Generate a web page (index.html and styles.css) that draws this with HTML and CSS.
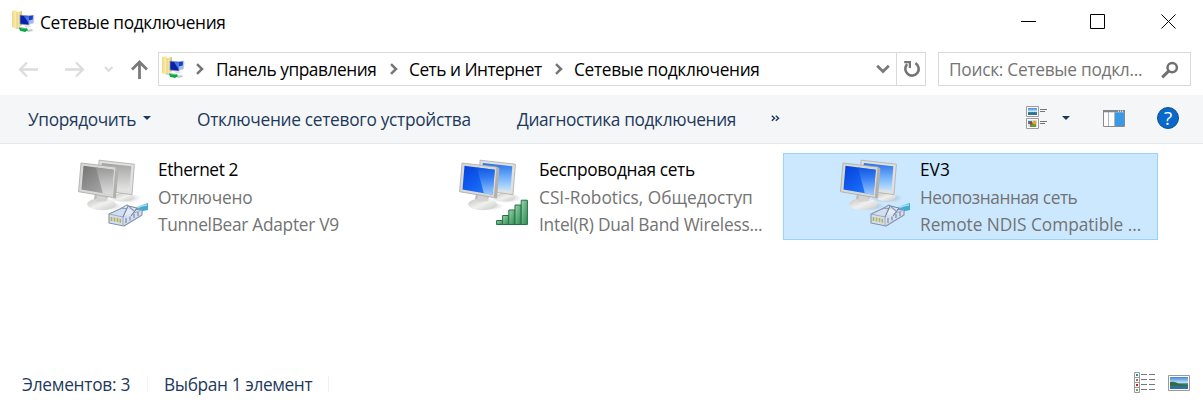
FILE: index.html
```html
<!DOCTYPE html>
<html lang="ru">
<head>
<meta charset="utf-8">
<title>Сетевые подключения</title>
<link rel="stylesheet" href="styles.css">
</head>
<body>
<svg class="defs" aria-hidden="true">
  <defs>
    <linearGradient id="paper" x1="0" y1="0" x2="1" y2="0"><stop offset="0" stop-color="#efd883"/><stop offset=".5" stop-color="#fff3bd"/><stop offset="1" stop-color="#dfc160"/></linearGradient>
    <linearGradient id="blueA" x1="0" y1="0" x2=".9" y2="1"><stop offset="0" stop-color="#0640d8"/><stop offset=".55" stop-color="#1260f2"/><stop offset="1" stop-color="#2b80fa"/></linearGradient>
    <linearGradient id="blueB" x1="0" y1="0" x2="0" y2="1"><stop offset="0" stop-color="#1258e0"/><stop offset=".4" stop-color="#3f86f4"/><stop offset="1" stop-color="#c4e2ff"/></linearGradient>
    <linearGradient id="blueC" x1="0" y1="0" x2="0" y2="1"><stop offset="0" stop-color="#2a6fe8"/><stop offset=".5" stop-color="#6fb0fa"/><stop offset="1" stop-color="#c8e4ff"/></linearGradient>
    <linearGradient id="grayA" x1="0" y1="0" x2=".9" y2="1"><stop offset="0" stop-color="#747474"/><stop offset=".55" stop-color="#959595"/><stop offset="1" stop-color="#b0b0b0"/></linearGradient>
    <linearGradient id="grayB" x1="0" y1="0" x2="0" y2="1"><stop offset="0" stop-color="#9d9d9d"/><stop offset="1" stop-color="#eeeeee"/></linearGradient>
    <linearGradient id="grayC" x1="0" y1="0" x2="0" y2="1"><stop offset="0" stop-color="#a2a2a2"/><stop offset="1" stop-color="#e6e6e6"/></linearGradient>
    <linearGradient id="stand" x1="0" y1="0" x2="1" y2="1"><stop offset="0" stop-color="#c2c2c2"/><stop offset=".5" stop-color="#f0f0ee"/><stop offset="1" stop-color="#c6c6c6"/></linearGradient>
    <linearGradient id="bar" x1="0" y1="0" x2="1" y2="1"><stop offset="0" stop-color="#9bd3ac"/><stop offset="1" stop-color="#2c8a50"/></linearGradient>
    <linearGradient id="sky" x1="0" y1="0" x2="0" y2="1"><stop offset="0" stop-color="#3f86d8"/><stop offset=".5" stop-color="#c5e6f8"/><stop offset=".55" stop-color="#4d8877"/><stop offset=".75" stop-color="#2e7690"/><stop offset="1" stop-color="#2c6cb0"/></linearGradient>
    <radialGradient id="shade"><stop offset="0" stop-color="#777" stop-opacity=".5"/><stop offset="1" stop-color="#777" stop-opacity="0"/></radialGradient>

    <symbol id="folder" viewBox="0 0 24 24">
      <path d="M1 2 6 1v2l5-1v14l-5 4-5-2z" fill="url(#paper)"/>
      <path d="M6 3v17" stroke="#d8bb60" stroke-width=".8"/>
      <path d="M14 7l9-1-.5 8-7 2z" fill="#9fb9e8" stroke="#c4cde0" stroke-width=".7"/>
      <path d="M17 7l5-.5-.3 4-4 1z" fill="#1b3fc4"/>
      <path d="M9 6l8 1 1 9-9-1z" fill="#0a22a6" stroke="#8498cc" stroke-width=".7"/>
      <path d="M13 7l4 .5.8 7z" fill="#4777e8"/>
      <path d="M13 16l6 .5 1 1.5-5 .5z" fill="#e1e1df"/>
      <path d="M4 19l5-1 2 2-1 1z" fill="#ccd3cf"/>
      <path d="M15 21l6-1 1 2-5 1z" fill="#c2cec8"/>
      <path d="M8 18.5l8 .7 1 2-3 1.8-5-1.3z" fill="#12a44a"/>
      <path d="M10 19l5 .5" stroke="#63d58b"/>
    </symbol>

    <symbol id="machines" viewBox="0 0 72 72">
      <ellipse cx="47" cy="40" rx="16" ry="5" fill="url(#shade)"/>
      <ellipse cx="46" cy="39" rx="10" ry="4.2" fill="url(#stand)"/>
      <path d="M21 2.2 56.4 6.2 54 36.7 20 32z" fill="#e0e0de" stroke="#b3b3b2" stroke-width=".9" stroke-linejoin="round"/>
      <path class="screen-back" d="M23.8 4.9 53.3 8.2 51.5 33 23 29z"/>
      <ellipse cx="28" cy="48" rx="17" ry="4.5" fill="url(#shade)"/>
      <path d="M17 36h13l-1 9H15z" fill="#bcbcba"/>
      <ellipse cx="23.5" cy="46.3" rx="14.3" ry="6" fill="url(#stand)"/>
      <path d="M19 37h9l1 6-11 1z" fill="#d3d3d1"/>
      <path d="M3 5 37.5 9 40 10.5 37.5 40 34.5 39.5.5 33.7z" fill="#d8d8d6" stroke="#a8a8a7" stroke-width=".8" stroke-linejoin="round"/>
      <path d="M37.5 9 40 10.5 37.5 40 35 39z" fill="#b0b0af"/>
      <path class="screen-front" d="M5.5 7.7 35.8 11.7 33.6 36.7 3.5 31.6z"/>
      <path class="screen-shine" d="M18 9.4 35.8 11.7 33.6 36.7 24.8 35.2z"/>
    </symbol>

    <symbol id="plug" viewBox="0 0 42 26">
      <path d="M26 10C29 5 34 4 40 2v7c-6 1-8 2-11 5z" fill="#40abd5"/>
      <path d="M29 7q5-3 10-3" fill="none" stroke="#a4e0f4" stroke-width="1.4"/>
      <path d="M1 13 14 7l20 2v5l-18 11-15-3z" class="plug-body" stroke="#8492aa" stroke-width="1.1" stroke-linejoin="round"/>
      <path d="M1 13 15 16 34 9M15 16v8" fill="none" stroke="#9daac1" stroke-width="1"/>
      <path d="M15 16 20 5 29 7 23 15" fill="#e8effa" fill-opacity=".75" stroke="#7485a3" stroke-width="1.1"/>
      <path d="M12 8 19 4 26 10" fill="none" stroke="#8d9bb2" stroke-width="1.1"/>
      <path d="M3.5 16v4M6.5 16.5v4M9.5 17v4M12.3 17.7v4" stroke="#b6b54c" stroke-width="1.7"/>
      <path d="M18 17v5M22 15.5v4M26 13v4M30 11v4" stroke="#8593aa" stroke-width="1.3"/>
    </symbol>
    <symbol id="chevron" viewBox="0 0 10 12"><path d="M2 1.2 7 6 2 10.8" fill="none" stroke="#767676" stroke-width="2.5"/></symbol>
  </defs>
</svg>

<div class="window">
  <header class="titlebar">
    <svg class="folder-icon"><use href="#folder"/></svg>
    <h1 class="title"><span class="t-net">Сетевые подключения</span></h1>
    <div class="controls">
      <svg width="16" height="16" viewBox="0 0 16 16"><path d="M0 8.5h15" stroke="#000"/></svg>
      <svg width="16" height="16" viewBox="0 0 16 16"><path d="M.5 1.5h14v14H.5z" fill="none" stroke="#000"/></svg>
      <svg width="16" height="16" viewBox="0 0 16 16"><path d="M.5 1.5l14 14M14.5 1.5l-14 14" stroke="#000"/></svg>
    </div>
  </header>

  <nav class="nav">
    <svg class="arrows" width="139" height="34" viewBox="0 0 139 34" fill="none">
      <g stroke="#dcdcdc" stroke-width="2"><path d="M20 17.5h18M27 10.5l-7 7 7 7" stroke-width="2.3"/><path d="M65 17.5h18M76 10.5l7 7-7 7" stroke-width="2.3"/><path d="M105 15l3.7 3.8 3.7-3.8"/></g>
    </svg>
    <svg class="up" width="19" height="34" viewBox="0 0 19 34" fill="none" stroke="#7a7a7a" stroke-width="2.8"><path d="M8.5 27V10.5M1 17.5l7.5-7.5 7.5 7.5"/></svg>
    <div class="address">
      <svg class="folder-icon"><use href="#folder"/></svg>
      <svg class="chev chev-first"><use href="#chevron"/></svg>
      <span class="crumb crumb-panel"><span class="t-panel">Панель управления</span></span>
      <svg class="chev"><use href="#chevron"/></svg>
      <span class="crumb crumb-inet"><span class="t-inet">Сеть и Интернет</span></span>
      <svg class="chev"><use href="#chevron"/></svg>
      <span class="crumb"><span class="t-net">Сетевые подключения</span></span>
      <svg class="drop" width="14" height="10" viewBox="0 0 14 10"><path d="M1.2 1.8 7 7.5l5.8-5.7" fill="none" stroke="#7a7a7a" stroke-width="2.8"/></svg>
      <span class="refresh"><svg width="18" height="18" viewBox="0 0 18 18" fill="none" stroke="#757575" stroke-width="2.6"><path d="M12.4 3.1A6.7 6.7 0 1 1 4.2 4.2"/><path d="M1.2 2.2h5.7v5.7" stroke-width="2.2"/></svg></span>
    </div>
    <div class="search">
      <span class="t-search">Поиск: Сетевые подкл...</span>
      <svg width="18" height="18" viewBox="0 0 18 18" fill="none" stroke="#707070"><circle cx="11.2" cy="6.6" r="4.7" stroke-width="2.5"/><path d="M7.6 10.2 1.2 16.3" stroke-width="3"/></svg>
    </div>
  </nav>

  <div class="toolbar">
    <span class="cmd cmd-sort"><span class="t-sort">Упорядочить</span><i class="caret"></i></span>
    <span class="cmd cmd-off"><span class="t-off">Отключение сетевого устройства</span></span>
    <span class="cmd cmd-diag"><span class="t-diag">Диагностика подключения</span></span>
    <svg class="more" width="9" height="8" viewBox="0 0 9 8" fill="none" stroke="#1e395b" stroke-width="1.4"><path d="M.8.7 3.6 3.2.8 5.8M4.8.7 7.6 3.2 4.8 5.8"/></svg>
    <svg class="views" width="22" height="24" viewBox="0 0 22 24">
      <path d="M.5.5h12v10H.5zM.5 12.5h12v10H.5z" fill="#fff" stroke="#9b9b9b"/>
      <path d="M2 2h9v7H2z" fill="url(#sky)"/>
      <path d="M2 14h9v7H2z" fill="#cde5ee"/>
      <path d="M2 15h4v3H2z" fill="#4777bd"/><path d="M4 17h6v4H4z" fill="#679739"/><circle cx="8.5" cy="16.5" r="2" fill="#eca827"/><circle cx="5" cy="17" r="1.5" fill="#b93932"/>
      <path d="M14 3.5h7M14 5.5h5M14 15.5h7M14 17.5h5" stroke="#777"/>
    </svg>
    <i class="caret caret-view"></i>
    <svg class="pane" width="22" height="17" viewBox="0 0 22 17"><path d="M.5.5h21v16H.5z" fill="#fff" stroke="#8a8a8a"/><path d="M0 0h22v2.3H0z" fill="#81878c"/><path d="M15 1.2h1M17 1.2h1M19 1.2h1" stroke="#fff"/><path d="M5.5 2v14M11.5 2v14" stroke="#b4b4b4"/><path d="M12 2.3h9V16h-9z" fill="#3999e7"/></svg>
    <span class="help">?</span>
  </div>

  <main class="items">
    <article class="item off">
      <div class="picture"><svg class="machine"><use href="#machines"/></svg><svg class="overlay plug"><use href="#plug"/></svg></div>
      <div class="info"><b><span class="t-eth">Ethernet 2</span></b><p><span class="t-dis">Отключено</span></p><p><span class="t-bear">TunnelBear Adapter V9</span></p></div>
    </article>
    <article class="item">
      <div class="picture"><svg class="machine"><use href="#machines"/></svg>
        <svg class="overlay signal" viewBox="0 0 32 26" fill="url(#bar)" stroke="#237244"><path d="M.6 21.5h6v4h-6z"/><path d="M6.6 16.5h6.2v9H6.6z"/><path d="M12.8 11h6.2v14.5h-6.2z"/><path d="M19 6h6.2v19.5H19z"/><path d="M25.2 1.2h6.2v24.3h-6.2z"/></svg></div>
      <div class="info"><b><span class="t-wifi">Беспроводная сеть</span></b><p><span class="t-csi">CSI-Robotics, Общедоступ</span></p><p><span class="t-intel">Intel(R) Dual Band Wireless...</span></p></div>
    </article>
    <article class="item selected">
      <div class="picture"><svg class="machine"><use href="#machines"/></svg><svg class="overlay plug"><use href="#plug"/></svg></div>
      <div class="info"><b><span class="t-ev">EV3</span></b><p><span class="t-unk">Неопознанная сеть</span></p><p><span class="t-ndis">Remote NDIS Compatible ...</span></p></div>
    </article>
  </main>

  <footer class="status">
    <span class="count"><span class="t-count">Элементов: 3</span></span>
    <span class="chosen"><span class="t-sel">Выбран 1 элемент</span></span>
    <svg class="details" width="22" height="21" viewBox="0 0 22 21">
      <path d="M.5.5h5v20h-5zM.5 5.5h5M.5 10.5h5M.5 15.5h5" fill="#fff" stroke="#999"/>
      <path d="M2 2h2v2H2z" fill="#258aac"/><path d="M2 7h2v2H2z" fill="#a56b48"/><path d="M2 12h2v2H2z" fill="#c62020"/><path d="M2 17h2v2H2z" fill="#70a650"/>
      <path d="M7 2.5h6M15 2.5h6M7 7.5h6M15 7.5h6M7 12.5h6M15 12.5h6M7 17.5h6M15 17.5h6" stroke="#777"/>
    </svg>
    <svg width="22" height="16" viewBox="0 0 22 16"><path d="M.5.5h21v15H.5z" fill="#fff" stroke="#999"/><path d="M2 2h18v12H2z" fill="url(#sky)"/><path d="M2 7q5-1 9 2l9 1v1H2z" fill="#316b49"/></svg>
  </footer>
</div>
</body>
</html>
```
FILE: styles.css
```css
* { box-sizing: border-box; margin: 0; }
body { width: 1203px; height: 400px; overflow: hidden; background: #fff; font: 17.3px/24px "Open Sans", "Noto Sans", sans-serif; color: #000; }
svg { flex: none; display: block; }
.defs { position: absolute; width: 0; height: 0; }
.window { display: flex; flex-direction: column; height: 400px; white-space: nowrap; }
.window span { flex: none; }

/* Tracking per label */
.t-net { letter-spacing: -.32px; }
.t-panel { letter-spacing: -.45px; }
.t-inet { letter-spacing: -.5px; }
.t-search { letter-spacing: -.27px; }
.t-sort { letter-spacing: -.36px; }
.t-off { letter-spacing: -.29px; }
.t-diag { letter-spacing: -.37px; }
.t-eth { letter-spacing: -.4px; }
.t-dis { letter-spacing: -.2px; }
.t-bear { letter-spacing: -.28px; }
.t-wifi { letter-spacing: -.33px; }
.t-intel { letter-spacing: -.23px; }
.t-unk { letter-spacing: -.43px; }
.t-ndis { letter-spacing: -.04px; }
.t-count { letter-spacing: -.25px; }
.t-sel { letter-spacing: -.38px; }

.titlebar { display: flex; height: 45px; padding: 9px 0 0 11px; }
.folder-icon { width: 24px; height: 24px; }
.title { margin: 2px 0 0 5px; font-size: inherit; font-weight: 400; }
.controls { display: flex; gap: 55px; margin: 4px 26px 0 auto; }
.controls svg:first-child { margin-right: -2px; }

.nav { display: flex; height: 50px; padding-top: 7px; }
.arrows { margin-right: -8px; }
.address { display: flex; align-items: center; width: 768px; height: 34px; margin-left: 8px; padding-left: 2px; border: 1px solid #d9d9d9; }
.address .folder-icon { margin-top: -4px; }
.chev { width: 10px; height: 12px; margin: 0 10px; }
.chev-first { margin-left: 10px; margin-right: 11px; }
.crumb { margin-top: 2px; }
.crumb-panel { width: 163px; }
.crumb-inet { width: 135px; }
.drop { margin-left: auto; margin-right: 6px; }
.refresh { display: flex; align-items: center; width: 29px; height: 32px; padding-left: 6px; border-left: 1px solid #d9d9d9; }
.search { display: flex; align-items: center; justify-content: space-between; width: 253px; height: 34px; margin-left: 12px; padding: 1px 11px 0 10px; border: 1px solid #d9d9d9; color: #757575; }

.toolbar { display: flex; height: 49px; padding: 13px 24px 0 28px; background: #f4f6f8; border-bottom: 1px solid #e5e8ea; color: #1e395b; }
.cmd { display: flex; }
.cmd-sort { width: 169px; }
.cmd-off { width: 320px; }
.cmd-diag { width: 254px; }
.caret { width: 0; height: 0; margin: 8px 0 0 auto; border: 4px solid transparent; border-top-color: #1e395b; border-bottom: 0; }
.cmd-sort .caret { margin-right: 46px; }
.more { margin-top: 7px; }
.views { margin: -2px 14px 0 auto; }
.caret-view { margin-left: 0; margin-right: 33px; }
.pane { margin-top: 2px; margin-right: 32px; }
.help { width: 22px; height: 22px; margin-top: -1px; border: 1px solid #155084; border-radius: 50%; background: #0868cc; color: #fff; font-size: 19px; line-height: 20px; text-align: center; }

.items { display: flex; gap: 6px; height: 226px; padding: 9px 0 0 21px; }
.item { --front: url(#blueA); --back: url(#blueC); --shine: url(#blueB); display: flex; width: 375px; height: 87px; padding: 4px 0 0 56px; border: 1px solid transparent; }
.off { --front: url(#grayA); --back: url(#grayC); --shine: url(#grayB); }
.selected { background: #cce8ff; border-color: #99d1ff; }
.picture { position: relative; flex: none; width: 80px; height: 72px; }
.machine { width: 72px; height: 72px; }
.screen-front { fill: var(--front); }
.screen-back { fill: var(--back); }
.screen-shine { fill: var(--shine); opacity: .75; }
.plug-body { fill: #d3dff1; }
.overlay { position: absolute; }
.plug { left: 30px; top: 43px; width: 42px; height: 26px; }
.signal { left: 37px; top: 41px; width: 32px; height: 26px; }
.info { color: #737373; line-height: 27px; margin-top: -2px; }
.info b { display: block; color: #000; font-weight: 400; line-height: 28px; }

.status { display: flex; height: 30px; padding: 2px 13px 0 22px; color: #1e395b; }
.status > span { height: 24px; padding-top: 1px; }
.count { width: 126px; background: linear-gradient(#f1f1f1, #f1f1f1) right 4px / 1px 16px no-repeat; }
.chosen { width: 181px; padding-left: 16px; background: linear-gradient(#f1f1f1, #f1f1f1) right 4px / 1px 16px no-repeat; }
.details { margin: 0 12px 0 auto; }
.status > svg:last-child { margin-top: 3px; }
```
